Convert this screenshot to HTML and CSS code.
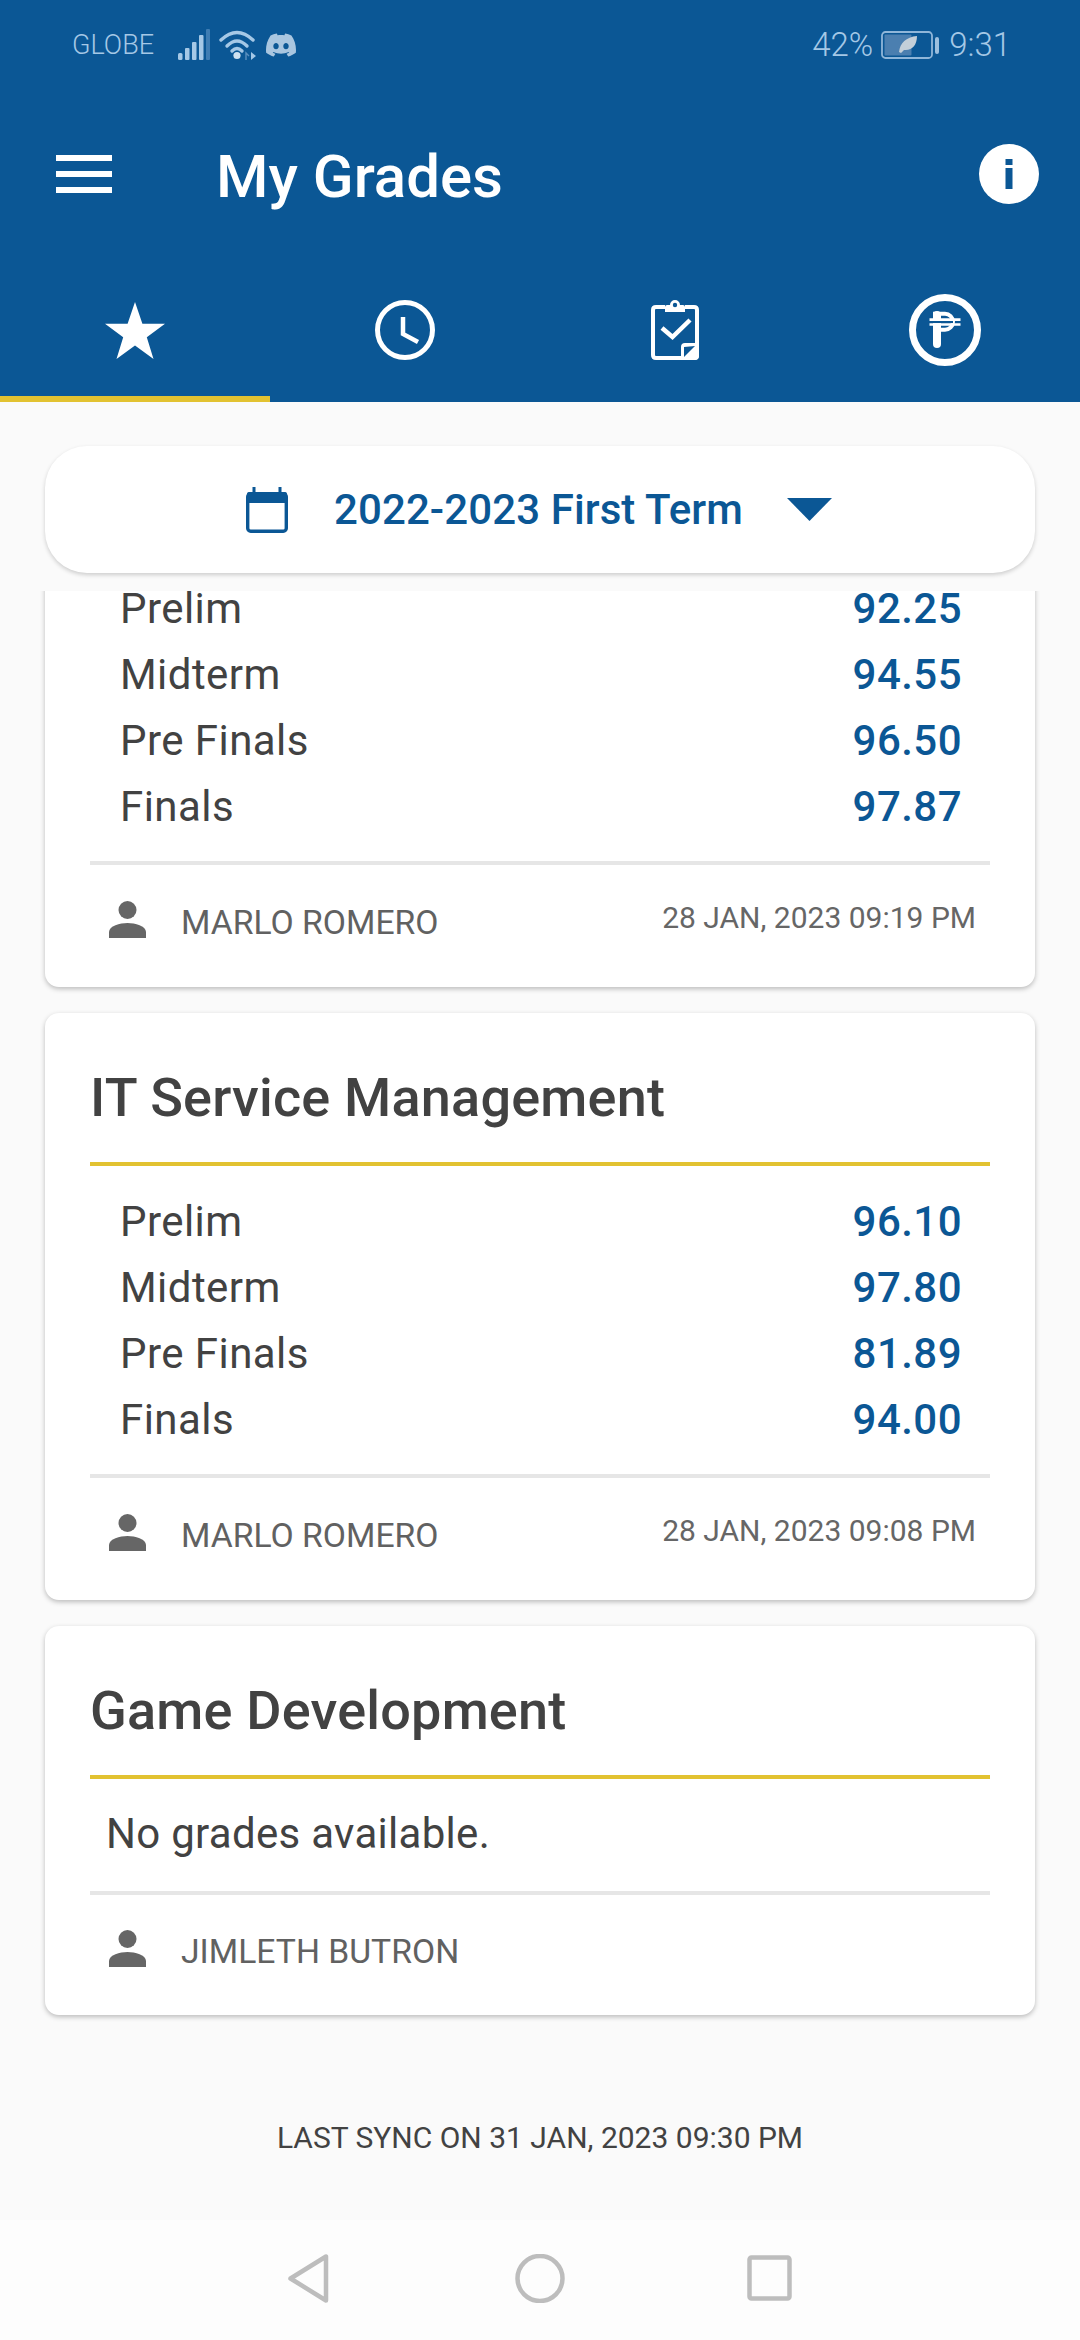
FILE: index.html
```html
<!DOCTYPE html>
<html lang="en">
<head>
<meta charset="utf-8">
<title>My Grades</title>
<link rel="stylesheet" href="styles.css">
</head>
<body>
<div class="screen">
  <header class="header">
    <div class="status">
      <div class="status-group">
        <span class="carrier">GLOBE</span>
        <svg class="ic-signal" viewBox="0 0 34 32" width="34" height="32">
          <rect x="1" y="24" width="4.5" height="7" rx="1.5" fill="#a5c8e6"/>
          <rect x="8" y="19" width="4.5" height="12" rx="1" fill="#a5c8e6"/>
          <rect x="15" y="13" width="4.5" height="18" rx="1" fill="#a5c8e6"/>
          <rect x="22" y="6" width="4.5" height="25" rx="1" fill="#a5c8e6"/>
          <rect x="29" y="0" width="4" height="31" rx="1" fill="#3f7db3"/>
        </svg>
        <svg class="ic-wifi" viewBox="0 0 37 30" width="37" height="30">
          <g fill="none" stroke="#a5c8e6" stroke-width="3.4" stroke-linecap="round">
            <path d="M2 10Q18 -5 34 10"/>
            <path d="M8 16Q18 6 28 16"/>
            <path d="M13 21Q18 16 23 21"/>
          </g>
          <circle cx="18" cy="25.5" r="3.6" fill="#d0e2f1"/>
          <path d="M27 30V23L30 26" fill="none" stroke="#5a8fbe" stroke-width="1.4"/>
          <path d="M32 22L37 26L32 30Z" fill="#a5c8e6"/>
        </svg>
        <svg class="ic-discord" viewBox="0 0 24 24" width="30" height="30">
          <path fill="#a9c6e0" d="M20.317 4.3698a19.7913 19.7913 0 00-4.8851-1.5152.0741.0741 0 00-.0785.0371c-.211.3753-.4447.8648-.6083 1.2495-1.8447-.2762-3.68-.2762-5.4868 0-.1636-.3933-.4058-.8742-.6177-1.2495a.077.077 0 00-.0785-.037 19.7363 19.7363 0 00-4.8852 1.515.0699.0699 0 00-.0321.0277C.5334 9.0458-.319 13.5799.0992 18.0578a.0824.0824 0 00.0312.0561c2.0528 1.5076 4.0413 2.4228 5.9929 3.0294a.0777.0777 0 00.0842-.0276c.4616-.6304.8731-1.2952 1.226-1.9942a.076.076 0 00-.0416-.1057c-.6528-.2476-1.2743-.5495-1.8722-.8923a.077.077 0 01-.0076-.1277c.1258-.0943.2517-.1923.3718-.2914a.0743.0743 0 01.0776-.0105c3.9278 1.7933 8.18 1.7933 12.0614 0a.0739.0739 0 01.0785.0095c.1202.099.246.1981.3728.2924a.077.077 0 01-.0066.1276 12.2986 12.2986 0 01-1.873.8914.0766.0766 0 00-.0407.1067c.3604.698.7719 1.3628 1.225 1.9932a.076.076 0 00.0842.0286c1.961-.6067 3.9495-1.5219 6.0023-3.0294a.077.077 0 00.0313-.0552c.5004-5.177-.8382-9.6739-3.5485-13.6604a.061.061 0 00-.0312-.0286zM8.02 15.3312c-1.1825 0-2.1569-1.0857-2.1569-2.419 0-1.3332.9555-2.4189 2.157-2.4189 1.2108 0 2.1757 1.0952 2.1568 2.419 0 1.3332-.9555 2.4189-2.1569 2.4189zm7.9748 0c-1.1825 0-2.1569-1.0857-2.1569-2.419 0-1.3332.9554-2.4189 2.1569-2.4189 1.2108 0 2.1757 1.0952 2.1568 2.419 0 1.3332-.946 2.4189-2.1568 2.4189Z"/>
        </svg>
      </div>
      <div class="status-group status-right">
        <span class="status-num">42%</span>
        <svg class="ic-battery" viewBox="0 0 60 28" width="60" height="28">
          <rect x="1" y="1" width="50" height="26" rx="3.5" fill="none" stroke="#8fb6d9" stroke-width="1.8"/>
          <rect x="3.5" y="3.5" width="27" height="21" rx="1" fill="#4b7fb0"/>
          <path d="M18 21C19 12 25 6 36 5C36 14 31 20 23 19L20 22Z" fill="#c3cfd9"/>
          <rect x="54" y="6" width="4" height="17" rx="2" fill="#9cbfde"/>
        </svg>
        <span class="status-num">9:31</span>
      </div>
    </div>

    <div class="appbar">
      <svg class="ic-menu" viewBox="0 0 56 38" width="56" height="38">
        <rect width="56" height="6" fill="#fff"/>
        <rect y="16" width="56" height="6" fill="#fff"/>
        <rect y="32" width="56" height="6" fill="#fff"/>
      </svg>
      <h1 class="title">My Grades</h1>
      <svg class="ic-info" viewBox="0 0 60 60" width="60" height="60">
        <circle cx="30" cy="30" r="30" fill="#fff"/>
        <rect x="26.5" y="15" width="7" height="6" fill="#0b5795"/>
        <rect x="26.5" y="24" width="7" height="21" fill="#0b5795"/>
      </svg>
    </div>

    <nav class="tabs">
      <div class="tab tab-active">
        <svg viewBox="0 0 60 57" width="60" height="57">
          <polygon fill="#fff" points="30,0 37.4,21.7 60,21.7 41.8,35.3 48.5,57 30,43.6 11.5,57 18.2,35.3 0,21.7 22.6,21.7"/>
        </svg>
      </div>
      <div class="tab">
        <svg viewBox="0 0 60 60" width="60" height="60">
          <circle cx="30" cy="30" r="27.5" fill="none" stroke="#fff" stroke-width="5"/>
          <path d="M28 17V34L43 42" fill="none" stroke="#fff" stroke-width="4.5"/>
        </svg>
      </div>
      <div class="tab">
        <svg viewBox="0 0 48 60" width="48" height="60">
          <path d="M14 7H5Q2 7 2 10V55Q2 58 5 58H43Q46 58 46 55V10Q46 7 43 7H34" fill="none" stroke="#fff" stroke-width="4"/>
          <path d="M14 12V7Q14 5 16 5H19A5 5 0 0 1 29 5H32Q34 5 34 7V12Z" fill="#fff"/>
          <circle cx="24" cy="5" r="2.2" fill="#0b5795"/>
          <path d="M11 28L21.5 37L39 20" fill="none" stroke="#fff" stroke-width="4.5"/>
          <path d="M30 60V47Q30 43 34 43H48V56Q48 60 44 60Z" fill="#fff"/>
          <polygon points="33,47 44,46 33,57" fill="#0b5795"/>
        </svg>
      </div>
      <div class="tab">
        <svg viewBox="0 0 72 72" width="72" height="72">
          <circle cx="36" cy="36" r="32.5" fill="none" stroke="#fff" stroke-width="7"/>
          <path d="M28 21V50" fill="none" stroke="#fff" stroke-width="8" stroke-linecap="round"/>
          <path d="M24 19.7H36A8 8 0 0 1 36 35.7H30" fill="none" stroke="#fff" stroke-width="4"/>
          <path d="M22 28H44" fill="none" stroke="#0b5795" stroke-width="2.2"/>
          <path d="M20.5 25.6H51.5M20.5 30.5H51.5" fill="none" stroke="#fff" stroke-width="2.6"/>
        </svg>
      </div>
    </nav>
  </header>

  <main class="content">
    <div class="selector">
      <svg class="ic-calendar" viewBox="0 0 42 46" width="42" height="46">
        <rect x="1.7" y="6.7" width="38.6" height="37.6" rx="3" fill="none" stroke="#0b5795" stroke-width="3.4"/>
        <rect x="1" y="5" width="40" height="11" rx="2" fill="#0b5795"/>
        <rect x="6.5" y="0" width="3" height="6" fill="#0b5795"/>
        <rect x="32.5" y="0" width="3" height="6" fill="#0b5795"/>
      </svg>
      <span class="selector-text">2022-2023 First Term</span>
      <svg class="ic-arrow" viewBox="0 0 45 23" width="45" height="23">
        <polygon points="0,0 45,0 22.5,23" fill="#0b5795"/>
      </svg>
    </div>

    <div class="scroller">
      <section class="card card-scrolled">
        <div class="grades">
          <div class="grade"><span>Prelim</span><span class="grade-value">92.25</span></div>
          <div class="grade"><span>Midterm</span><span class="grade-value">94.55</span></div>
          <div class="grade"><span>Pre Finals</span><span class="grade-value">96.50</span></div>
          <div class="grade"><span>Finals</span><span class="grade-value">97.87</span></div>
        </div>
        <div class="card-foot">
          <svg class="ic-person" viewBox="0 0 37 37" width="37" height="37"><circle cx="18.5" cy="9" r="9" fill="#666"/><path d="M0 37V31C0 25 11 22 18.5 22S37 25 37 31V37Z" fill="#666"/></svg>
          <span class="teacher">MARLO ROMERO</span>
          <span class="stamp">28 JAN, 2023 09:19 PM</span>
        </div>
      </section>

      <section class="card">
        <h2 class="card-title">IT Service Management</h2>
        <div class="grades">
          <div class="grade"><span>Prelim</span><span class="grade-value">96.10</span></div>
          <div class="grade"><span>Midterm</span><span class="grade-value">97.80</span></div>
          <div class="grade"><span>Pre Finals</span><span class="grade-value">81.89</span></div>
          <div class="grade"><span>Finals</span><span class="grade-value">94.00</span></div>
        </div>
        <div class="card-foot">
          <svg class="ic-person" viewBox="0 0 37 37" width="37" height="37"><circle cx="18.5" cy="9" r="9" fill="#666"/><path d="M0 37V31C0 25 11 22 18.5 22S37 25 37 31V37Z" fill="#666"/></svg>
          <span class="teacher">MARLO ROMERO</span>
          <span class="stamp">28 JAN, 2023 09:08 PM</span>
        </div>
      </section>

      <section class="card">
        <h2 class="card-title">Game Development</h2>
        <p class="no-grades">No grades available.</p>
        <div class="card-foot card-foot-solo">
          <svg class="ic-person" viewBox="0 0 37 37" width="37" height="37"><circle cx="18.5" cy="9" r="9" fill="#666"/><path d="M0 37V31C0 25 11 22 18.5 22S37 25 37 31V37Z" fill="#666"/></svg>
          <span class="teacher">JIMLETH BUTRON</span>
        </div>
      </section>

      <p class="sync">LAST SYNC ON 31 JAN, 2023 09:30 PM</p>
    </div>
  </main>

  <footer class="sysnav">
    <svg class="nav-back" viewBox="0 0 41 49" width="41" height="49">
      <path d="M38 2.5V46.5L2.5 24.5Z" fill="none" stroke="#bdbdbd" stroke-width="4.5" stroke-linejoin="round"/>
    </svg>
    <svg class="nav-home" viewBox="0 0 50 49" width="50" height="49">
      <circle cx="25" cy="24.5" r="22.5" fill="none" stroke="#bdbdbd" stroke-width="4.5"/>
    </svg>
    <svg class="nav-recent" viewBox="0 0 45 46" width="45" height="46">
      <rect x="2.5" y="2.5" width="40" height="41" rx="2" fill="none" stroke="#bdbdbd" stroke-width="4.5"/>
    </svg>
  </footer>
</div>
</body>
</html>
```

FILE: styles.css
```css
* { box-sizing: border-box; }

html, body {
  margin: 0;
  padding: 0;
}

body {
  font-family: Roboto, "Noto Sans", sans-serif;
  background: #fafafa;
}

.screen {
  width: 1080px;
  height: 2340px;
  display: flex;
  flex-direction: column;
  overflow: hidden;
}

/* Header */
.header {
  background: #0b5795;
  flex: none;
}

.status {
  height: 90px;
  padding: 0 69px 0 72px;
  display: flex;
  align-items: center;
  justify-content: space-between;
}

.status-group {
  display: flex;
  align-items: center;
}

.carrier {
  font-size: 27px;
  font-weight: 300;
  color: #a5c8e6;
  margin-right: 23px;
}

.ic-wifi { margin-left: 8px; }
.ic-discord { margin-left: 10px; }

.status-right { gap: 8px; }

.status-num {
  font-size: 33px;
  font-weight: 300;
  line-height: 40px;
  color: #a5c8e6;
}

.appbar {
  height: 168px;
  padding: 0 41px 0 56px;
  display: flex;
  align-items: center;
}

.title {
  margin: 5px 0 0 104px;
  flex: 1;
  font-size: 60px;
  font-weight: 500;
  line-height: 70px;
  color: #fff;
}

.tabs {
  height: 144px;
  display: grid;
  grid-template-columns: repeat(4, 270px);
}

.tab {
  display: flex;
  align-items: center;
  justify-content: center;
  padding-top: 6px;
  border-bottom: 6px solid transparent;
}

.tab-active { border-bottom-color: #e2c231; }

/* Content */
.content {
  flex: 1;
  min-height: 0;
  display: flex;
  flex-direction: column;
  background: #fafafa;
  padding-top: 44px;
}

.selector {
  flex: none;
  height: 127px;
  margin: 0 45px 18px;
  border-radius: 42px;
  background: #fff;
  box-shadow: 0 2px 4px rgba(0, 0, 0, 0.18);
  display: flex;
  align-items: center;
  justify-content: center;
  gap: 44px;
}

.ic-calendar { margin-right: 2px; margin-left: -2px; }

.selector-text {
  font-size: 42px;
  font-weight: 500;
  letter-spacing: 0.1px;
  color: #0b5795;
}

.scroller {
  flex: 1;
  min-height: 0;
  overflow: hidden;
  padding: 0 45px;
}

.card {
  background: #fff;
  border-radius: 14px;
  box-shadow: 0 2px 5px rgba(0, 0, 0, 0.25);
  padding: 0 45px;
  margin-bottom: 26px;
}

.card-scrolled {
  margin-top: -37px;
  padding-top: 22px;
}

.card-title {
  margin: 0;
  padding: 50px 0 29px;
  font-size: 54px;
  font-weight: 500;
  letter-spacing: 0.2px;
  line-height: 70px;
  color: #424242;
  border-bottom: 4px solid #e2c231;
}

.grades { padding: 23px 28px 21px 30px; }

.card-scrolled .grades { padding-top: 0; }

.grade {
  display: flex;
  justify-content: space-between;
  font-size: 42px;
  letter-spacing: 0.45px;
  line-height: 66px;
  color: #424242;
}

.grade-value {
  font-weight: 500;
  color: #0b5795;
}

.no-grades {
  margin: 0;
  padding: 22px 16px 24px;
  font-size: 42px;
  letter-spacing: 0.3px;
  line-height: 66px;
  color: #424242;
}

.card-foot {
  height: 126px;
  padding: 36px 14px 49px 19px;
  border-top: 4px solid #e6e6e6;
  display: flex;
  align-items: center;
}

.card-foot-solo {
  height: 124px;
  padding-top: 35px;
  padding-bottom: 48px;
}

.teacher {
  margin-left: 35px;
  margin-top: 6px;
  font-size: 33.7px;
  font-weight: 400;
  line-height: 40px;
  color: #616161;
  flex: 1;
}

.stamp {
  margin-bottom: 4px;
  font-size: 30px;
  line-height: 40px;
  color: #666;
}

.sync {
  margin: 103px 0 0;
  text-align: center;
  font-size: 30px;
  line-height: 40px;
  color: #424242;
}

/* System nav */
.sysnav {
  flex: none;
  height: 120px;
  background: #fdfdfd;
  padding-bottom: 4px;
  display: flex;
  align-items: center;
  justify-content: center;
}

.nav-home { margin: 0 182px 0 186px; }
```
